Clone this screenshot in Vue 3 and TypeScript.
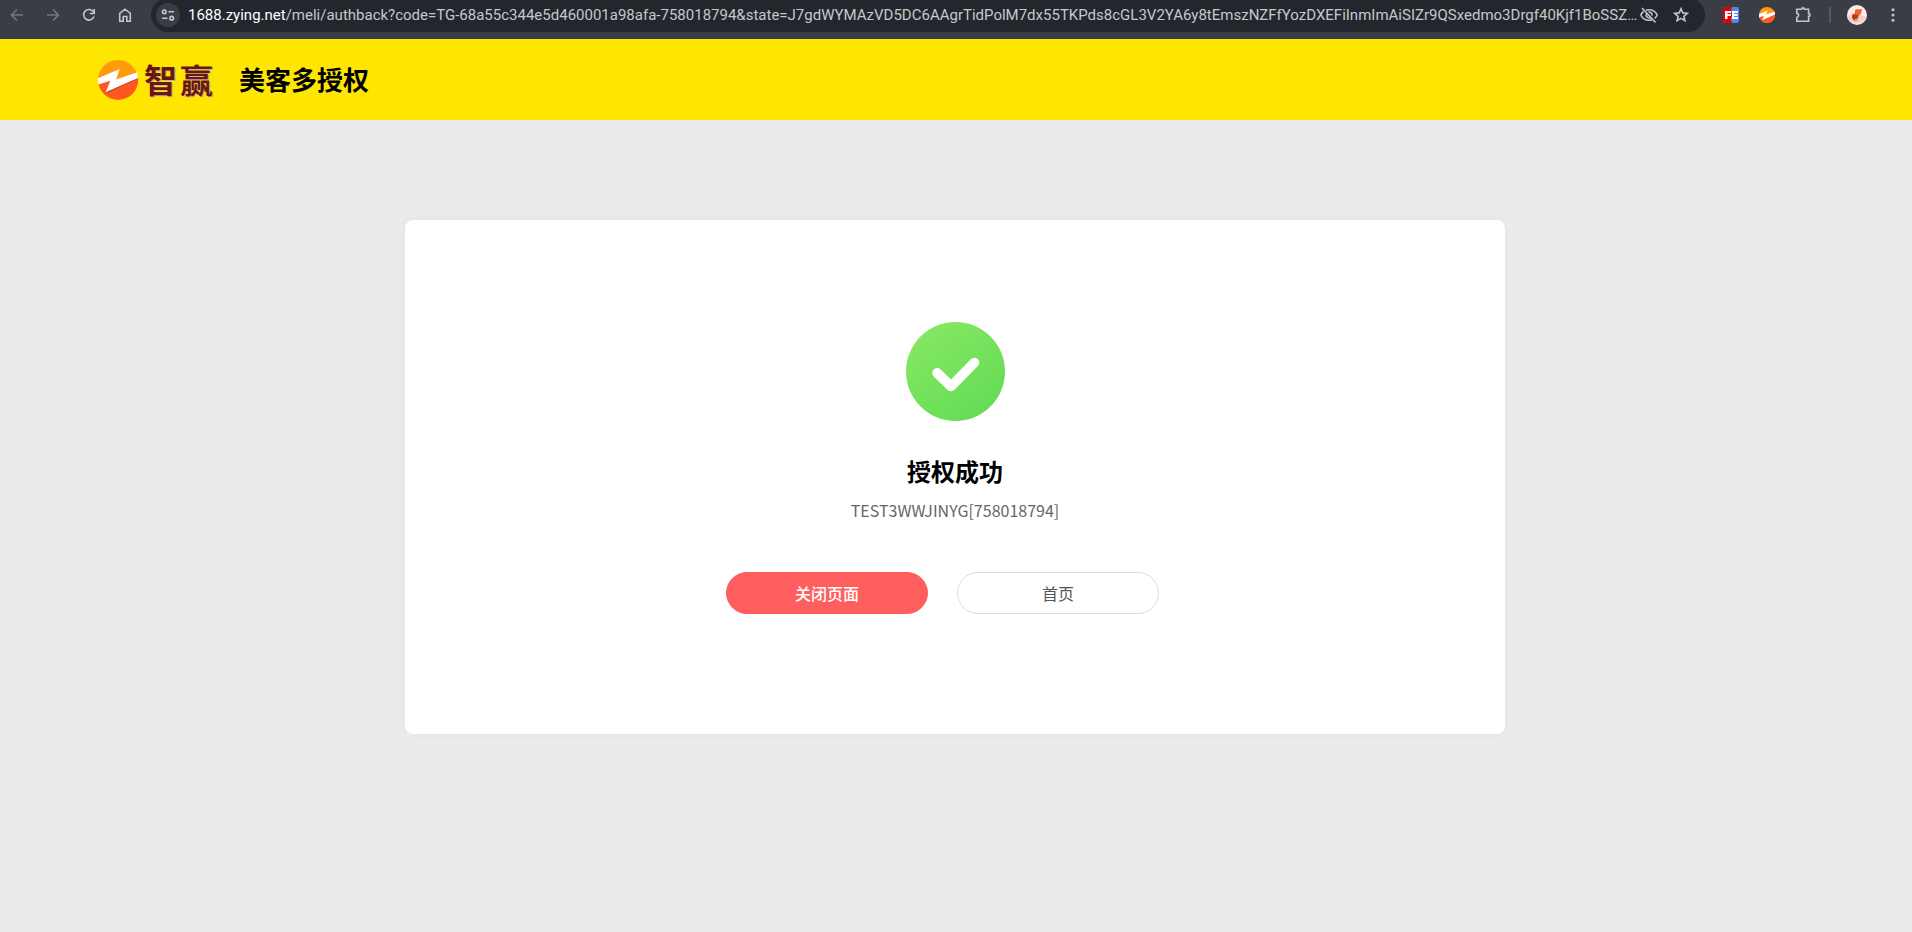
<script setup lang="ts">
const host = '1688.zying.net'
const path =
  '/meli/authback?code=TG-68a55c344e5d460001a98afa-758018794&state=J7gdWYMAzVD5DC6AAgrTidPolM7dx55TKPds8cGL3V2YA6y8tEmszNZFfYozDXEFiInmImAiSIZr9QSxedmo3Drgf40Kjf1BoSSZ…'
const account = 'TEST3WWJINYG[758018794]'

function closePage(): void {
  window.close()
}
</script>

<template>
  <div class="page">
    <nav class="toolbar" aria-label="浏览器工具栏">
      <div class="nav-buttons">
        <button class="icon-btn dim" aria-label="后退">
          <svg width="18" height="18" viewBox="0 0 18 18"><path d="M15 9H4M9 3.500 3.500 9 9 14.500" /></svg>
        </button>
        <button class="icon-btn dim" aria-label="前进">
          <svg width="18" height="18" viewBox="0 0 18 18"><path d="M3 9h11M9 3.500 14.500 9 9 14.500" /></svg>
        </button>
        <button class="icon-btn" aria-label="重新加载">
          <svg width="18" height="18" viewBox="0 0 18 18">
            <path d="M14 10.500A5.300 5.300 0 1 1 13.600 6.200M14.200 3v4.500H9.700" />
          </svg>
        </button>
        <button class="icon-btn" aria-label="主页">
          <svg width="18" height="18" viewBox="0 0 18 18">
            <path d="M3.700 15.200V7.300L9 3.200l5.300 4.100v7.900h-3.500v-4.700H7.200v4.700z" />
          </svg>
        </button>
      </div>

      <div class="address">
        <button class="site-info" aria-label="查看网站信息">
          <svg width="16" height="16" viewBox="0 0 16 16">
            <circle cx="4.300" cy="4.800" r="1.800" /><path d="M8.500 4.800H14M2 11.200h5.500" />
            <circle cx="11.700" cy="11.200" r="1.800" />
          </svg>
        </button>
        <div class="url"><span class="host">{{ host }}</span>{{ path }}</div>
        <div class="address-actions">
          <button class="icon-btn small" aria-label="第三方 Cookie 已屏蔽">
            <svg width="20" height="18" viewBox="0 0 20 18">
              <path d="M7 4.200A8.800 8.800 0 0 1 10 3.700c3.800 0 6.800 2.200 8.200 5.300a9 9 0 0 1-2.600 3.400M13 13.800a9 9 0 0 1-3 .5c-3.800 0-6.800-2.200-8.200-5.300a9 9 0 0 1 2.700-3.500M9.500 6a3 3 0 0 1 3.400 3.600M11.300 11.700A3 3 0 0 1 7.400 7.800M3 2l13.500 14.500" />
            </svg>
          </button>
          <button class="icon-btn small" aria-label="为此标签页添加书签">
            <svg width="18" height="18" viewBox="0 0 18 18">
              <path d="m9 2.800 1.800 4.100 4.500.4-3.400 3 1 4.400L9 12.400l-3.900 2.300 1-4.400-3.400-3 4.500-.4z" />
            </svg>
          </button>
        </div>
      </div>

      <div class="extensions">
        <button class="icon-btn" aria-label="FE 助手">
          <svg class="filled" width="16" height="16" viewBox="0 0 16 16">
            <rect width="16" height="16" rx="2" fill="#4a8af4" />
            <path d="M2 0h7L8 4l1 4-1 4 1 4H2a2 2 0 0 1-2-2V2a2 2 0 0 1 2-2z" fill="#e60000" />
            <path d="M2 4h6v2H4.500v1H8v2H4.500v3H2zM9 4h6v2h-4v1h3.500v2H11v1h4v2H9z" fill="#fff" />
          </svg>
        </button>
        <button class="icon-btn" aria-label="智赢">
          <svg class="filled" width="16" height="16" viewBox="0 0 40 40">
            <circle cx="20" cy="20" r="20" fill="#ff9b0b" />
            <path d="M.3 23 40 15.500A20 20 0 0 1 .3 23z" fill="#fd5722" />
            <path d="M0 17.500 21.700 9 18 19l21.300-7.500.7 7L7.700 33l4.600-11L.3 26z" fill="#fff" />
          </svg>
        </button>
        <button class="icon-btn" aria-label="扩展程序">
          <svg width="18" height="18" viewBox="0 0 18 18">
            <path d="M2.800 3.300h4.800a1.300 1.300 0 0 1 2.800 0h4.200v4.300a1.400 1.400 0 0 1 0 2.800v4.800H2.800v-3.600a2.300 2.300 0 0 0 0-4.500z" />
          </svg>
        </button>
        <span class="divider"></span>
        <button class="icon-btn" aria-label="个人资料">
          <svg class="filled" width="20" height="20" viewBox="0 0 20 20">
            <circle cx="10" cy="10" r="10" fill="#fde9e6" />
            <path d="M0 11.500 6 9l13 2.500A10 10 0 0 1 .3 12.500z" fill="#f8cfc9" />
            <path d="m8 5 2-1 1 .500L15 4l-1 4.500-2.500 3-.5 3L7.500 16 5 14V9.500L8 8z" fill="#e8642c" />
            <path d="m6 9.500 4.500.500.500 3-3 2-2.500-2z" fill="#a93c19" />
            <path d="m8 14 3-1v3l-3 .5z" fill="#dfa36b" />
          </svg>
        </button>
        <button class="icon-btn" aria-label="更多">
          <svg class="filled" width="18" height="18" viewBox="0 0 18 18">
            <g fill="#c3c5cb"><circle cx="9" cy="3.800" r="1.500" /><circle cx="9" cy="9" r="1.500" /><circle cx="9" cy="14.200" r="1.500" /></g>
          </svg>
        </button>
      </div>
    </nav>

    <header class="site-header">
      <a class="brand" href="#" aria-label="智赢">
        <svg width="40" height="40" viewBox="0 0 40 40">
          <circle cx="20" cy="20" r="20" fill="#ff9b0b" />
          <path d="M.3 23 40 15.500A20 20 0 0 1 .3 23z" fill="#fd5722" />
          <path d="m8.500 33.200 31.300-14.200-.3-2L12 28z" fill="#b94317" />
          <path d="M0 18.200 21.700 9 18 19.500l21.300-7.200.7 5.700L7.700 32.300l4.600-11.500L.3 24.500z" fill="#fff" />
        </svg>
        <span class="brand-name"><span>智</span><span>赢</span></span>
      </a>
      <h1 class="site-title">美客多授权</h1>
    </header>

    <main class="content">
      <section class="card">
        <svg class="success" width="99" height="99" viewBox="0 0 100 100" role="img" aria-label="成功">
          <defs>
            <linearGradient id="success-fill" x1="0.200" y1="0.100" x2="0.800" y2="0.900">
              <stop offset="0" stop-color="#84e762" />
              <stop offset="1" stop-color="#65dc56" />
            </linearGradient>
          </defs>
          <circle cx="50" cy="50" r="50" fill="url(#success-fill)" />
          <path d="M31.500 51.500 45.500 65 69 41" fill="none" stroke="#fff" stroke-width="10" stroke-linecap="round" stroke-linejoin="round" />
        </svg>
        <h2 class="result">授权成功</h2>
        <p class="account">{{ account }}</p>
        <div class="actions">
          <button class="action primary" @click="closePage">关闭页面</button>
          <a class="action" href="#">首页</a>
        </div>
      </section>
    </main>
  </div>
</template>

<style>
body {
  background: #ebebeb;
}
</style>

<style scoped>
.page {
  min-height: 100vh;
  background: #ebebeb;
  font-family: "Noto Sans CJK SC", sans-serif;
}

button {
  font-family: inherit;
  border: 0;
  padding: 0;
  background: none;
  cursor: pointer;
}

.toolbar {
  display: flex;
  align-items: flex-start;
  height: 39px;
  overflow: hidden;
  background: #3b3d45;
}

.nav-buttons {
  display: flex;
  gap: 6px;
  width: 151px;
  box-sizing: border-box;
  padding-left: 2px;
}

.icon-btn {
  display: flex;
  flex: none;
  align-items: center;
  justify-content: center;
  width: 30px;
  height: 30px;
}

.icon-btn svg,
.site-info svg {
  fill: none;
  stroke: #c3c5cb;
  stroke-width: 1.6;
}

.icon-btn svg.filled {
  stroke: none;
}

.icon-btn.dim svg {
  stroke: #75777e;
}

.address {
  display: flex;
  flex: 1;
  align-items: center;
  min-width: 0;
  height: 34px;
  box-sizing: border-box;
  margin-top: -2px;
  padding: 0 14px 0 5px;
  border-radius: 17px;
  background: #23262d;
}

.site-info {
  display: flex;
  flex: none;
  align-items: center;
  justify-content: center;
  width: 24px;
  height: 24px;
  border-radius: 50%;
  background: #3b3d45;
}

.url {
  flex: 1;
  min-width: 0;
  margin-left: 8px;
  overflow: hidden;
  color: #c6c8ca;
  font-family: Roboto, "Open Sans", sans-serif;
  font-size: 15px;
  line-height: 20px;
  white-space: nowrap;
}

.host {
  color: #fff;
}

.address-actions {
  display: flex;
  flex: none;
  gap: 12px;
}

.icon-btn.small {
  width: 20px;
}

.extensions {
  display: flex;
  align-items: center;
  gap: 6px;
  padding: 0 4px 0 11px;
}

.divider {
  width: 2px;
  height: 16px;
  margin: 0 5px;
  background: #565861;
}

.site-header {
  display: flex;
  align-items: center;
  height: 81px;
  padding-left: 98px;
  background: #ffe600;
}

.brand {
  display: flex;
  align-items: center;
  gap: 6px;
  color: #6a1707;
  text-decoration: none;
}

.brand-name {
  display: flex;
  gap: 3px;
  font-size: 33px;
  font-weight: 700;
  line-height: 38px;
  padding-bottom: 2px;
  text-shadow: 1px 1px 0 #c9b3a8;
}

.site-title {
  margin: 0 0 0 26px;
  padding-bottom: 2px;
  color: #000;
  font-size: 26px;
  font-weight: 700;
  line-height: 38px;
}

.content {
  padding: 100px 2px 100px 0;
}

.card {
  display: flex;
  flex-direction: column;
  align-items: center;
  max-width: 1100px;
  box-sizing: border-box;
  margin: 0 auto;
  padding: 102px 0 120px;
  border-radius: 8px;
  background: #fff;
  box-shadow: 0 0 10px rgba(0, 0, 0, 0.04);
}

.result {
  margin: 32px 0 0;
  color: #000;
  font-size: 24px;
  font-weight: 700;
  line-height: 36px;
}

.account {
  margin: 9px 0 0;
  color: #666;
  font-size: 16px;
  line-height: 24px;
}

.actions {
  display: flex;
  gap: 29px;
  margin-top: 50px;
  padding-right: 25px;
}

.action {
  width: 202px;
  height: 42px;
  box-sizing: border-box;
  border: 1px solid #dcdcdc;
  border-radius: 21px;
  color: #555;
  font-size: 16px;
  line-height: 40px;
  text-align: center;
  text-decoration: none;
}

.action.primary {
  border-color: #ff5e5e;
  background: #ff5e5e;
  color: #fff;
  font-weight: 500;
}
</style>
